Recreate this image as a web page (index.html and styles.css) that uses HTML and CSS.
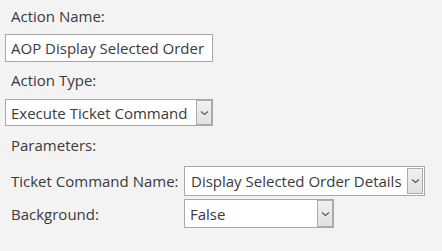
FILE: index.html
```html
<!DOCTYPE html>
<html lang="en">
<head>
  <meta charset="UTF-8" />
  <title>Action Editor</title>
  <link rel="stylesheet" href="styles.css">
</head>
<body>
  <div class="editor">
    <!-- Nombre de la acción -->
    <div class="field-label">Action Name:</div>
    <div class="text-box name-box">AOP Display Selected Order</div>

    <!-- Tipo de acción -->
    <div class="field-label type-label">Action Type:</div>
    <div class="combo type-combo">
      <span class="combo-value">Execute Ticket Command</span>
      <span class="combo-btn"><svg width="9" height="6" viewBox="0 0 9 6"><path d="M1 1.5 L4.5 4.5 L8 1.5" fill="none" stroke="#555" stroke-width="1.1"/></svg></span>
    </div>

    <div class="field-label params-label">Parameters:</div>

    <!-- Parámetros -->
    <div class="params">
      <div class="param-label">Ticket Command Name:</div>
      <div class="combo cmd-combo">
        <span class="combo-value">Display Selected Order Details</span>
        <span class="combo-btn"><svg width="9" height="6" viewBox="0 0 9 6"><path d="M1 1.5 L4.5 4.5 L8 1.5" fill="none" stroke="#555" stroke-width="1.1"/></svg></span>
      </div>
      <div class="param-label">Background:</div>
      <div class="combo bg-combo">
        <span class="combo-value">False</span>
        <span class="combo-btn"><svg width="9" height="6" viewBox="0 0 9 6"><path d="M1 1.5 L4.5 4.5 L8 1.5" fill="none" stroke="#555" stroke-width="1.1"/></svg></span>
      </div>
    </div>
  </div>
</body>
</html>
```

FILE: styles.css
```css
* {
  box-sizing: border-box;
}
body {
  margin: 0;
  background-color: #f3f3f3;
  font-family: "Open Sans", "Noto Sans", sans-serif;
  font-size: 15px;
  color: #3a3a3a;
}

.editor {
  padding: 6px 5px;
  width: 442px;
  height: 251px;
}

.field-label {
  height: 20px;
  line-height: 20px;
  padding-left: 6px;
  margin-bottom: 8px;
}
.type-label {
  margin-bottom: 9px;
}
.params-label {
  margin-bottom: 11px;
}

.text-box,
.combo {
  background-color: #ffffff;
  border: 1px solid #a8a8a8;
  display: flex;
  align-items: center;
  white-space: nowrap;
}

.text-box {
  width: 208px;
  height: 28px;
  padding-left: 5px;
  margin-bottom: 8px;
}

.combo {
  height: 27px;
}
.combo-value {
  flex: 1;
  padding-left: 5px;
}
.combo-btn {
  width: 16px;
  height: 100%;
  border: 1px solid #acacac;
  background: linear-gradient(#f1f1f1, #e1e1e1);
  display: flex;
  align-items: center;
  justify-content: center;
}

.type-combo {
  width: 208px;
  margin-bottom: 9px;
}

.params {
  display: grid;
  grid-template-columns: 179px auto;
  row-gap: 3px;
  align-items: center;
  justify-items: start;
}
.param-label {
  padding-left: 6px;
}
.cmd-combo {
  width: 241px;
  height: 30px;
  padding: 1px;
}
.bg-combo {
  width: 150px;
  height: 29px;
}
```
